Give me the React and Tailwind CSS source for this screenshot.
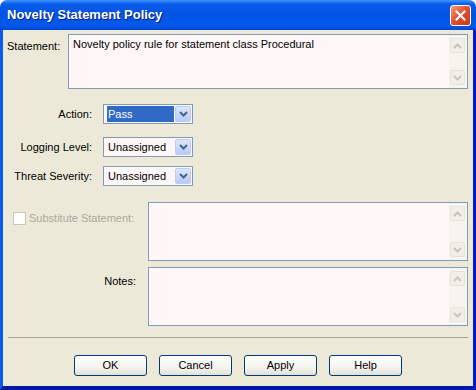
import React from 'react';

const font = "font-['Liberation_Sans',Arial,sans-serif]";

function Chevron({ up = false, color = '#c9c7ba' }) {
    return (
        <svg width="9" height="6" viewBox="0 0 9 6" className={up ? 'rotate-180' : ''}>
            <path d="M1 1 L4.5 4.5 L8 1" fill="none" stroke={color} strokeWidth="2" />
        </svg>
    );
}

function ScrollBar() {
    return (
        <div className="flex flex-col justify-between w-[18px] bg-[#f5f4ef] py-[3px] pl-px pr-[2px]">
            <div className="h-[15px] rounded-[2px] border border-[#e6e4da] bg-[#f1efe6] flex items-center justify-center">
                <Chevron up />
            </div>
            <div className="h-[15px] rounded-[2px] border border-[#e6e4da] bg-[#f1efe6] flex items-center justify-center">
                <Chevron />
            </div>
        </div>
    );
}

function TextArea({ className = '', children }) {
    return (
        <div className={`flex border border-[#7f9db9] bg-[#fff7f7] ${className}`}>
            <div className="flex-1 pl-1 pt-[3px] text-[11px] leading-[13px] text-black">{children}</div>
            <ScrollBar />
        </div>
    );
}

function Select({ value, selected = false }) {
    return (
        <div className="flex w-[90px] h-[20px] border border-[#7f9db9] bg-[#fff7f7] p-px">
            <div className="flex-1 flex items-center pl-[2px]">
                <span className={`flex-1 h-[16px] leading-[16px] text-[11px] ${selected ? 'bg-[#316ac5] text-white' : 'text-black'} pl-px mr-px`}>
                    {value}
                </span>
            </div>
            <div className="w-[16px] rounded-[2px] border border-[#b9cdf6] bg-[linear-gradient(180deg,#dce7fd,#b7cbf8)] flex items-center justify-center">
                <Chevron color="#4d6185" />
            </div>
        </div>
    );
}

function SelectRow({ label, value, selected, className = '' }) {
    return (
        <div className={`flex items-center ${className}`}>
            <div className="w-[84px] text-right text-[11px] text-black">{label}</div>
            <div className="ml-[11px]">
                <Select value={value} selected={selected} />
            </div>
        </div>
    );
}

function Button({ children }) {
    return (
        <button className="w-[73px] h-[21px] rounded-[3px] border border-[#003c74] bg-[linear-gradient(180deg,#ffffff_0%,#f4f3ee_60%,#e3e0d5_100%)] text-[11px] text-black">
            {children}
        </button>
    );
}

export default function App() {
    return (
        <div className={`w-[476px] h-[390px] flex flex-col ${font}`}>
            {/* Title bar */}
            <div className="h-[30px] rounded-t-[7px] bg-[linear-gradient(180deg,#3d95ff_0%,#0a5ae8_14%,#0054e3_50%,#0059ea_85%,#0047d6_100%)] flex items-center justify-between pl-[7px] pr-[5px]">
                <span className="text-white font-bold text-[13px] [text-shadow:1px_1px_0_#0a1e7a]">Novelty Statement Policy</span>
                <div className="w-[21px] h-[21px] rounded-[3px] border border-white bg-[linear-gradient(135deg,#f39a7c,#de4f2c_50%,#c8391c)] flex items-center justify-center">
                    <svg width="11" height="11" viewBox="0 0 11 11">
                        <path d="M1.5 1.5 L9.5 9.5 M9.5 1.5 L1.5 9.5" stroke="white" strokeWidth="2" strokeLinecap="square" />
                    </svg>
                </div>
            </div>

            {/* Client area */}
            <div className="flex-1 flex flex-col bg-[#ece9d8] border-l-[3px] border-l-[#0a5de9] border-r-[3px] border-r-[#0019cf] border-b-[4px] border-b-[#001aa3] px-[5px] pt-1">
                {/* Statement */}
                <div className="flex">
                    <div className="w-[61px] -ml-px pt-[4px] text-[11px] text-black">Statement:</div>
                    <TextArea className="w-[400px] h-[55px]">Novelty policy rule for statement class Procedural</TextArea>
                </div>

                <SelectRow className="mt-[15px]" label="Action:" value="Pass" selected />
                <SelectRow className="mt-[13px]" label="Logging Level:" value="Unassigned" />
                <SelectRow className="mt-[9px]" label="Threat Severity:" value="Unassigned" />

                {/* Substitute */}
                <div className="flex mt-[16px]">
                    <div className="w-[140px] flex items-start pt-[10px] pl-[5px]">
                        <div className="w-[13px] h-[13px] border border-[#cac8bb] bg-white" />
                        <span className="ml-[3px] text-[11px] leading-[13px] text-[#aca899]">Substitute Statement:</span>
                    </div>
                    <TextArea className="w-[320px] h-[59px]" />
                </div>

                {/* Notes */}
                <div className="flex mt-[6px]">
                    <div className="w-[128px] pt-[6px] text-right text-[11px] text-black">Notes:</div>
                    <div className="ml-[12px]">
                        <TextArea className="w-[320px] h-[59px]" />
                    </div>
                </div>

                <div className="mt-[11px] h-px bg-[#aca899]" />

                <div className="mt-[17px] flex justify-center gap-[12px]">
                    <Button>OK</Button>
                    <Button>Cancel</Button>
                    <Button>Apply</Button>
                    <Button>Help</Button>
                </div>
            </div>
        </div>
    );
}
